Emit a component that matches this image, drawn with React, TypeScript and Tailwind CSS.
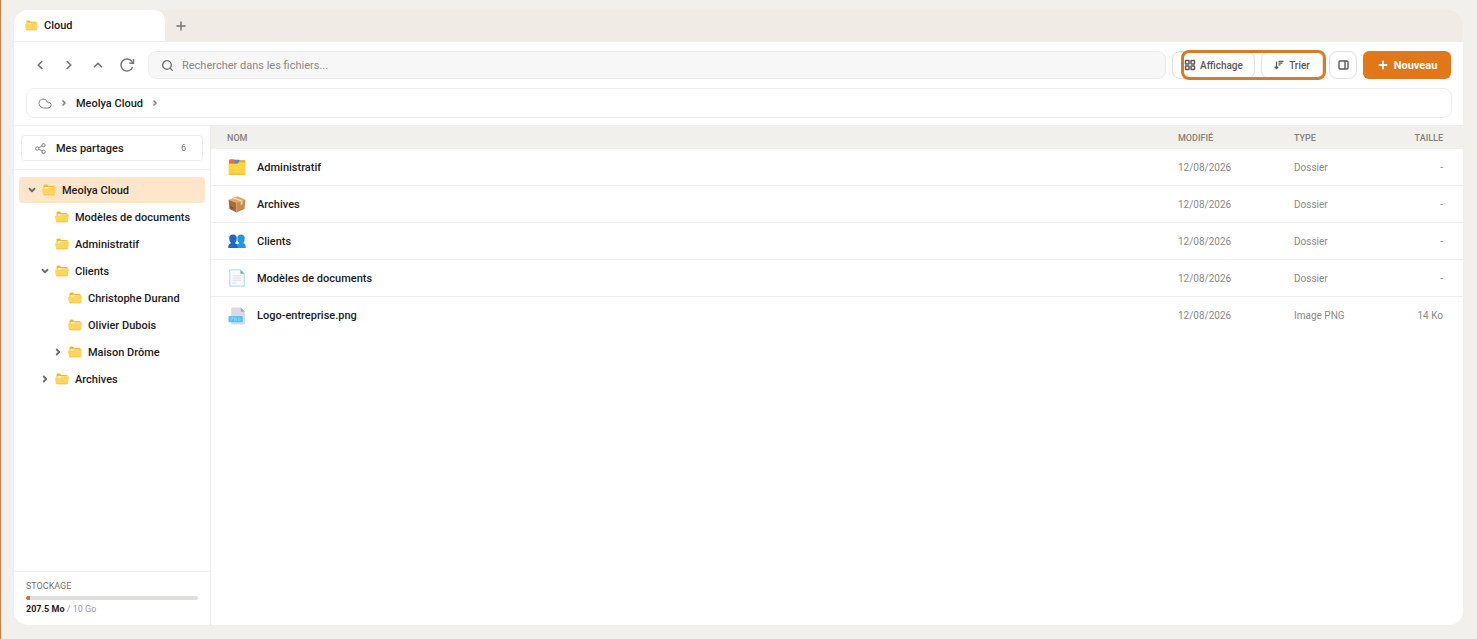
import { ReactNode, useState } from "react";
import clsx from "clsx";
import { ChevronDown, ChevronLeft, ChevronRight, ChevronUp, LayoutGrid, Plus, Search } from "lucide-react";

interface TreeItem {
  id: string;
  label: string;
  level: number;
  state?: "open" | "closed";
}

interface FileItem {
  name: string;
  icon: ReactNode;
  modified: string;
  type: string;
  size: string;
}

const treeItems: TreeItem[] = [
  { id: "root", label: "Meolya Cloud", level: 0, state: "open" },
  { id: "models", label: "Modèles de documents", level: 1 },
  { id: "admin", label: "Administratif", level: 1 },
  { id: "clients", label: "Clients", level: 1, state: "open" },
  { id: "durand", label: "Christophe Durand", level: 2 },
  { id: "dubois", label: "Olivier Dubois", level: 2 },
  { id: "drome", label: "Maison Drôme", level: 2, state: "closed" },
  { id: "archives", label: "Archives", level: 1, state: "closed" },
];

const levelPadding = ["pl-2", "pl-[21px]", "pl-[34px]"];

const files: FileItem[] = [
  { name: "Administratif", icon: <DividersIcon />, modified: "12/08/2026", type: "Dossier", size: "-" },
  { name: "Archives", icon: <PackageIcon />, modified: "12/08/2026", type: "Dossier", size: "-" },
  { name: "Clients", icon: <PeopleIcon />, modified: "12/08/2026", type: "Dossier", size: "-" },
  { name: "Modèles de documents", icon: <DocumentIcon />, modified: "12/08/2026", type: "Dossier", size: "-" },
  { name: "Logo-entreprise.png", icon: <PngIcon />, modified: "12/08/2026", type: "Image PNG", size: "14 Ko" },
];

function FolderIcon({ className }: { className?: string }) {
  return (
    <svg viewBox="0 0 28 24" className={className} aria-hidden="true">
      <path d="M3 3.500Q3 1 5.500 1H10l2.500 3H23q2 0 2 2v13H3z" fill="#f2b92e" />
      <path d="M5 6h18v6H5z" fill="#fff3c4" />
      <path d="M0 11.500Q-.2 9.500 2 9.500h9l3-3H26q2 0 1.800 2L26 20.500q-.2 2-2.200 2H4q-2 0-2.200-2z" fill="#ffd55c" />
      <path d="M2 20.500h24q-.3 2-2 2H4q-1.800 0-2-2z" fill="#f7c64d" />
    </svg>
  );
}

// Card index dividers
function DividersIcon() {
  return (
    <svg viewBox="0 0 32 32" className="size-[18px]" aria-hidden="true">
      <path d="M2 4h28v8H2z" fill="#a8ab96" />
      <path d="M2 4q0-2 2-2h7l2 3v5H2z" fill="#ed6c47" />
      <path d="M12 3h8l2 3v4H12z" fill="#4a8fd0" />
      <path d="M1 10h16l4-5h8q2 0 2 2v21q0 2-2 2H3q-2 0-2-2z" fill="#fdd740" />
      <path d="M21 4h8q2 0 2 2v2H19z" fill="#ecae29" />
      <path d="M1 27h30v1q0 2-2 2H3q-2 0-2-2z" fill="#fbc42d" />
    </svg>
  );
}

function PackageIcon() {
  return (
    <svg viewBox="0 0 32 32" className="size-[18px]" aria-hidden="true">
      <path d="M1 8.500 15 13v18L2.500 25z" fill="#a9693a" />
      <path d="M15 13 31 8.500 29.500 25 15 31z" fill="#c98b50" />
      <path d="M1 8.500 17 2l14 6.500L15 14z" fill="#e0ab73" />
      <path d="m8 5.700 3-1.200 15 5.500-3.500 1.200z" fill="#f4dcb5" />
      <path d="m22.500 11.200 3.500-1.200v6l-3.500 2z" fill="#ecd0a4" />
      <path d="m4 20 5 2.400v3L4 23z" fill="#80492a" />
    </svg>
  );
}

function PeopleIcon() {
  return (
    <svg viewBox="0 0 36 32" className="h-4 w-[18px]" aria-hidden="true">
      <path d="M17 30q-1-8 5.500-9.500Q18 16 18.500 10 19 3 26 3q7 0 7.500 7 .3 6-3 10.500Q36 22 35.500 30z" fill="#2196ed" />
      <path d="M.5 30Q0 22 6 20.500 2 16 2.500 10 3 3 10 3q7 0 7.500 7 .3 6-3.500 10.500Q20 22 19.500 30z" fill="#1769c4" />
    </svg>
  );
}

function DocumentIcon() {
  return (
    <svg viewBox="0 0 32 32" className="size-[18px]" aria-hidden="true">
      <path d="M3 1.500h19l7 7v22H3z" fill="#f7fafc" stroke="#a5d0ea" strokeWidth="1.500" />
      <path d="M22 1.500 29 8.500h-7z" fill="#6fa9d2" />
      <path d="M8 12h16M8 16h16M8 20h15M8 25h7" stroke="#d8dce0" strokeWidth="1.600" />
    </svg>
  );
}

function PngIcon() {
  return (
    <svg viewBox="0 0 34 34" className="size-[18px]" aria-hidden="true">
      <path d="M6 4q0-3 3-3h15l8 8v21q0 3-3 3H9q-3 0-3-3z" fill="#d9dae5" />
      <path d="m24 1 8 8h-6q-2 0-2-2z" fill="#aaa4b5" />
      <rect x="1" y="17" width="27" height="12" rx="2" fill="#55c3f3" />
      <path d="M6 26v-6h3v3H6m6 3v-6l4 6v-6m7 1h-3v4h3v-2" fill="none" stroke="#9cdcfa" strokeWidth="1.200" />
    </svg>
  );
}

function RefreshIcon() {
  return (
    <svg viewBox="0 0 16 16" className="size-4" fill="none" stroke="currentColor" strokeWidth="1.500" aria-hidden="true">
      <path d="M13.600 10A6 6 0 1 1 13 4.700l1.200 1.300" />
      <path d="M14.500 2v4.200h-4.200" />
    </svg>
  );
}

function CloudIcon() {
  return (
    <svg viewBox="0 0 28 22" className="h-[11px] w-[14px]" fill="none" stroke="currentColor" strokeWidth="2" aria-hidden="true">
      <path d="M8 19Q2.500 17 2 11.500 1.500 3 10 2q6.500-.2 8.500 6 7.500-.8 8 5.500-.2 6.500-6.500 6.500H11q-1.500 0-3-1z" />
    </svg>
  );
}

function ShareIcon() {
  return (
    <svg viewBox="0 0 20 20" className="size-[11px]" fill="none" stroke="currentColor" strokeWidth="1.600" aria-hidden="true">
      <circle cx="4" cy="10" r="3" />
      <circle cx="15.500" cy="4" r="3" />
      <circle cx="15.500" cy="16" r="3" />
      <path d="m6.700 8.600 6.200-3.200M6.700 11.400l6.200 3.200" />
    </svg>
  );
}

function SortIcon() {
  return (
    <svg viewBox="0 0 20 20" className="size-[10px]" fill="none" stroke="currentColor" strokeWidth="2.500" aria-hidden="true">
      <path d="M5 3v14M1.500 13.500 5 17l3.500-3.500M9 2.500h10M9 6h8M9 9.500h4" />
    </svg>
  );
}

function PanelIcon() {
  return (
    <svg viewBox="0 0 22 20" className="h-[10px] w-[11px]" fill="none" stroke="currentColor" strokeWidth="2.800" aria-hidden="true">
      <rect x="2" y="2" width="18" height="16" rx="2" />
      <path d="M14 2v16" />
    </svg>
  );
}

function NavButton({ label, children }: { label: string; children: ReactNode }) {
  return (
    <button aria-label={label} className="flex size-7 items-center justify-center rounded-md text-[#7b7875] hover:bg-gray-100">
      {children}
    </button>
  );
}

export default function App() {
  const [selectedId, setSelectedId] = useState("root");
  const [query, setQuery] = useState("");

  return (
    <div className="flex min-h-screen border-l border-[#c98147] bg-[#f1f0ed] pt-[10px] pr-[14px] pb-[14px] pl-[13px] font-['Roboto',sans-serif] text-[11px] leading-[17px] text-[#1d1c1b]">
      <div className="flex min-w-0 flex-1 flex-col overflow-hidden rounded-[14px] bg-white">
        {/* Tabs */}
        <div className="flex h-8 border-b border-[#f0eeec] bg-[#f0ebe5]">
          <button className="flex w-[151px] items-center gap-[6px] rounded-t-[10px] bg-white pl-[11px] font-medium">
            <FolderIcon className="h-[11px] w-[13px]" />
            Cloud
          </button>
          <button aria-label="Nouvel onglet" className="flex w-8 items-center justify-center text-[#77736f]">
            <Plus size={14} strokeWidth={2.5} />
          </button>
        </div>

        {/* Toolbar */}
        <div className="flex items-center gap-[6px] px-3 pt-[9px]">
          <nav className="mr-px flex gap-px">
            <NavButton label="Précédent"><ChevronLeft size={14} strokeWidth={3} /></NavButton>
            <NavButton label="Suivant"><ChevronRight size={14} strokeWidth={3} /></NavButton>
            <NavButton label="Dossier parent"><ChevronUp size={14} strokeWidth={3} /></NavButton>
            <NavButton label="Actualiser"><RefreshIcon /></NavButton>
          </nav>

          <label className="flex h-7 min-w-0 flex-1 items-center gap-2 rounded-lg border border-[#ececea] bg-[#f7f7f7] pl-3 text-[#777471]">
            <Search size={13} strokeWidth={2.6} />
            <input
              type="text"
              aria-label="Rechercher"
              placeholder="Rechercher dans les fichiers..."
              value={query}
              onChange={(e) => setQuery(e.target.value)}
              className="min-w-0 flex-1 bg-transparent outline-none placeholder:text-[#8c8985]"
            />
          </label>

          <div className="relative flex gap-[6px] text-[10px] font-medium text-[#5c5956]">
            <button className="flex h-7 w-[83px] items-center justify-center gap-1 rounded-lg border border-[#e3e1df] bg-white">
              <LayoutGrid size={12} strokeWidth={3} />
              Affichage
            </button>
            <button className="flex h-7 w-[62px] items-center justify-center gap-[5px] rounded-lg border border-[#e3e1df] bg-white">
              <SortIcon />
              Trier
            </button>
            {/* Highlight ring around the display options */}
            <div className="pointer-events-none absolute -inset-y-px -right-[3px] left-[9px] rounded-lg border-[3px] border-[#d97b25]" />
          </div>

          <button aria-label="Volet de détails" className="flex size-7 items-center justify-center rounded-lg border border-[#e3e1df] text-[#5c5956]">
            <PanelIcon />
          </button>
          <button className="flex h-7 w-[88px] items-center justify-center gap-[5px] rounded-md bg-[#e27719] font-bold text-white">
            <Plus size={12} strokeWidth={4} />
            Nouveau
          </button>
        </div>

        {/* Breadcrumb */}
        <div className="border-b border-[#f0efed] pt-[9px] pr-[11px] pb-[7px] pl-3">
          <nav className="flex h-[30px] items-center rounded-lg border border-[#efeeec] pl-[11px] text-[#85817d]">
            <a href="#" aria-label="Accueil"><CloudIcon /></a>
            <ChevronRight size={8} strokeWidth={5} className="mx-2" />
            <a href="#" className="font-medium text-[#1d1c1b]">Meolya Cloud</a>
            <ChevronRight size={8} strokeWidth={5} className="mx-2" />
          </nav>
        </div>

        <div className="flex flex-1">
          {/* Sidebar */}
          <aside className="flex w-[197px] shrink-0 flex-col border-r border-[#ecebe9]">
            <div className="border-b border-[#f0efed] px-[7px] pt-[9px] pb-2">
              <button className="flex h-[26px] w-full items-center rounded border border-[#ecebe9] pr-4 pl-[13px]">
                <span className="text-[#77736f]"><ShareIcon /></span>
                <span className="ml-[10px] font-medium">Mes partages</span>
                <span className="ml-auto text-[9px] text-[#77736f]">6</span>
              </button>
            </div>

            <ul className="flex flex-1 flex-col gap-px px-[5px] pt-[7px]">
              {treeItems.map((item) => (
                <li key={item.id}>
                  <button
                    onClick={() => setSelectedId(item.id)}
                    className={clsx(
                      "flex h-[26px] w-full items-center rounded font-medium whitespace-nowrap",
                      levelPadding[item.level],
                      item.id === selectedId && "bg-[#ffe5c9]"
                    )}
                  >
                    <span className="flex w-[15px] text-[#716b65]">
                      {item.state === "open" && <ChevronDown size={10} strokeWidth={4.5} />}
                      {item.state === "closed" && <ChevronRight size={10} strokeWidth={4.5} />}
                    </span>
                    <FolderIcon className="mr-[6px] h-3 w-[14px] shrink-0" />
                    {item.label}
                  </button>
                </li>
              ))}
            </ul>

            <div className="border-t border-[#f0efed] px-3 pt-[6px] pb-2 text-[9px] leading-4">
              <div className="text-[#77736f]">STOCKAGE</div>
              <div className="mt-[2px] mb-px h-1 overflow-hidden rounded-full bg-[#dfdedb]">
                <div className="h-full bg-[#cf742b]" style={{ width: "2.1%" }} />
              </div>
              <div className="text-[#9a9794]">
                <strong className="text-[#1d1c1b]">207.5 Mo</strong> / 10 Go
              </div>
            </div>
          </aside>

          {/* File list */}
          <main className="min-w-0 flex-1">
            <table className="w-full table-fixed border-separate border-spacing-0 text-left text-[10px] text-[#8d8a86]">
              <thead className="bg-[#f1f0ec] text-[9px] leading-4 text-[#85817c]">
                <tr className="h-[23px]">
                  <th className="p-0 pl-4 font-medium">NOM</th>
                  <th className="w-[116px] p-0 font-medium">MODIFIÉ</th>
                  <th className="w-[100px] p-0 font-medium">TYPE</th>
                  <th className="w-[69px] p-0 pr-5 text-right font-medium">TAILLE</th>
                </tr>
              </thead>
              <tbody>
                {files.map((file) => (
                  <tr key={file.name} className="h-[37px] *:border-b *:border-[#f0efed] last:*:border-b-0">
                    <td className="p-0 pl-[17px]">
                      <div className="flex items-center gap-[11px] text-[11px] font-medium text-[#1d1c1b]">
                        {file.icon}
                        {file.name}
                      </div>
                    </td>
                    <td className="p-0">{file.modified}</td>
                    <td className="p-0">{file.type}</td>
                    <td className="p-0 pr-5 text-right">{file.size}</td>
                  </tr>
                ))}
              </tbody>
            </table>
          </main>
        </div>
      </div>
    </div>
  );
}
